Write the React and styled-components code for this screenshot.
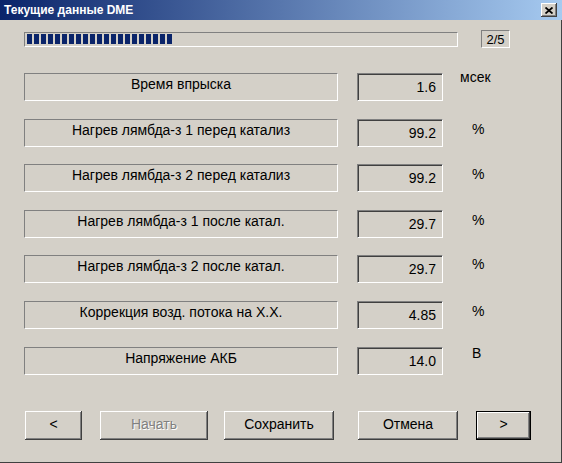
import React from 'react';
import styled, { createGlobalStyle, css } from 'styled-components';

const GlobalStyle = createGlobalStyle`
  html, body {
    margin: 0;
    padding: 0;
    background: #d4d0c8;
  }
  body {
    font-family: "Liberation Sans", Arial, sans-serif;
    font-size: 14px;
    color: #000;
  }
`;

// classic 3D edges
const raisedEdge = css`
  box-shadow:
    inset -1px -1px #404040,
    inset 1px 1px #ffffff,
    inset -2px -2px #808080,
    inset 2px 2px #d4d0c8;
`;

const staticEdge = css`
  border: 1px solid;
  border-color: #808080 #ffffff #ffffff #808080;
`;

const clientEdge = css`
  border: 1px solid;
  border-color: #808080 #ffffff #ffffff #808080;
  box-shadow: inset 1px 1px #404040, inset -1px -1px #d4d0c8;
`;

const Window = styled.div`
  width: 562px;
  height: 463px;
  box-sizing: border-box;
  display: flex;
  flex-direction: column;
  background: #d4d0c8;
  box-shadow: inset -1px -1px #404040;
`;

const TitleBar = styled.div`
  height: 20px;
  flex-shrink: 0;
  display: flex;
  align-items: center;
  justify-content: space-between;
  padding: 0 5px 0 4px;
  background: linear-gradient(to right, #0a246a, #a6caf0);
`;

const Title = styled.span`
  color: #fff;
  font-weight: bold;
  font-size: 12px;
`;

const CloseButton = styled.button`
  width: 16px;
  height: 14px;
  padding: 0;
  border: none;
  background: #d4d0c8;
  display: flex;
  align-items: center;
  justify-content: center;
  ${raisedEdge};
`;

const Body = styled.div`
  flex: 1;
  display: flex;
  flex-direction: column;
  padding: 10px 0 0 24px;
`;

const ProgressRow = styled.div`
  display: flex;
  align-items: center;
  height: 18px;
`;

const Progress = styled.div`
  width: 434px;
  height: 15px;
  box-sizing: border-box;
  ${staticEdge};
  display: flex;
  align-items: center;
  gap: 2px;
  padding-left: 2px;
`;

const Block = styled.span`
  width: 5px;
  height: 10px;
  background: #0a246a;
`;

const Counter = styled.div`
  margin-left: 23px;
  width: 29px;
  height: 18px;
  box-sizing: border-box;
  ${staticEdge};
  display: flex;
  align-items: center;
  justify-content: center;
  font-size: 13px;
`;

const Rows = styled.div`
  margin-top: 25px;
  display: flex;
  flex-direction: column;
  gap: 17.6px;
`;

const Row = styled.div`
  display: flex;
  height: 28px;
`;

const Label = styled.div`
  width: 314px;
  box-sizing: border-box;
  ${staticEdge};
  text-align: center;
  padding-top: 2px;
  line-height: 16px;
`;

const Value = styled.div`
  margin-left: 19px;
  width: 86px;
  box-sizing: border-box;
  ${clientEdge};
  text-align: right;
  padding: 5px 6px 0 0;
  line-height: 16px;
`;

const Unit = styled.div`
  margin-left: ${p => p.$offset}px;
  margin-top: ${p => p.$top}px;
  line-height: 16px;
`;

const Buttons = styled.div`
  margin-top: 36px;
  display: flex;
`;

const Button = styled.button`
  margin-left: ${p => p.$left}px;
  width: ${p => p.$width}px;
  height: 29px;
  border: none;
  background: #d4d0c8;
  font-family: inherit;
  font-size: 14px;
  color: #000;
  padding: 0 0 2px;
  ${raisedEdge};

  ${p => p.$default && css`
    box-shadow:
      inset 0 0 0 1px #000,
      inset -2px -2px #404040,
      inset 2px 2px #ffffff,
      inset -3px -3px #808080;
  `}

  &:disabled {
    color: #808080;
    text-shadow: 1px 1px #ffffff;
  }
`;

const rows = [
  { label: 'Время впрыска', value: '1.6', unit: 'мсек', offset: 17, top: -4 },
  { label: 'Нагрев лямбда-з 1 перед катализ', value: '99.2', unit: '%', offset: 29, top: 2 },
  { label: 'Нагрев лямбда-з 2 перед катализ', value: '99.2', unit: '%', offset: 29, top: 2 },
  { label: 'Нагрев лямбда-з 1 после катал.', value: '29.7', unit: '%', offset: 29, top: 2 },
  { label: 'Нагрев лямбда-з 2 после катал.', value: '29.7', unit: '%', offset: 29, top: 1 },
  { label: 'Коррекция возд. потока на Х.Х.', value: '4.85', unit: '%', offset: 29, top: 2 },
  { label: 'Напряжение АКБ', value: '14.0', unit: 'В', offset: 29, top: -2 },
];

export default function App() {
  return (
    <>
      <GlobalStyle />
      <Window>
        <TitleBar>
          <Title>Текущие данные DME</Title>
          <CloseButton>
            <svg width="8" height="7" viewBox="0 0 8 7">
              <path d="M0.5 0.5 L7.5 6.5 M7.5 0.5 L0.5 6.5" stroke="#000" strokeWidth="1.8" />
            </svg>
          </CloseButton>
        </TitleBar>
        <Body>
          <ProgressRow>
            <Progress>
              {Array.from({ length: 21 }, (_, i) => <Block key={i} />)}
            </Progress>
            <Counter>2/5</Counter>
          </ProgressRow>
          <Rows>
            {rows.map(r => (
              <Row key={r.label}>
                <Label>{r.label}</Label>
                <Value>{r.value}</Value>
                <Unit $offset={r.offset} $top={r.top}>{r.unit}</Unit>
              </Row>
            ))}
          </Rows>
          <Buttons>
            <Button $left={1} $width={57}>&lt;</Button>
            <Button $left={18} $width={108} disabled>Начать</Button>
            <Button $left={16} $width={110}>Сохранить</Button>
            <Button $left={24} $width={100}>Отмена</Button>
            <Button $left={18} $width={55} $default>&gt;</Button>
          </Buttons>
        </Body>
      </Window>
    </>
  );
}
